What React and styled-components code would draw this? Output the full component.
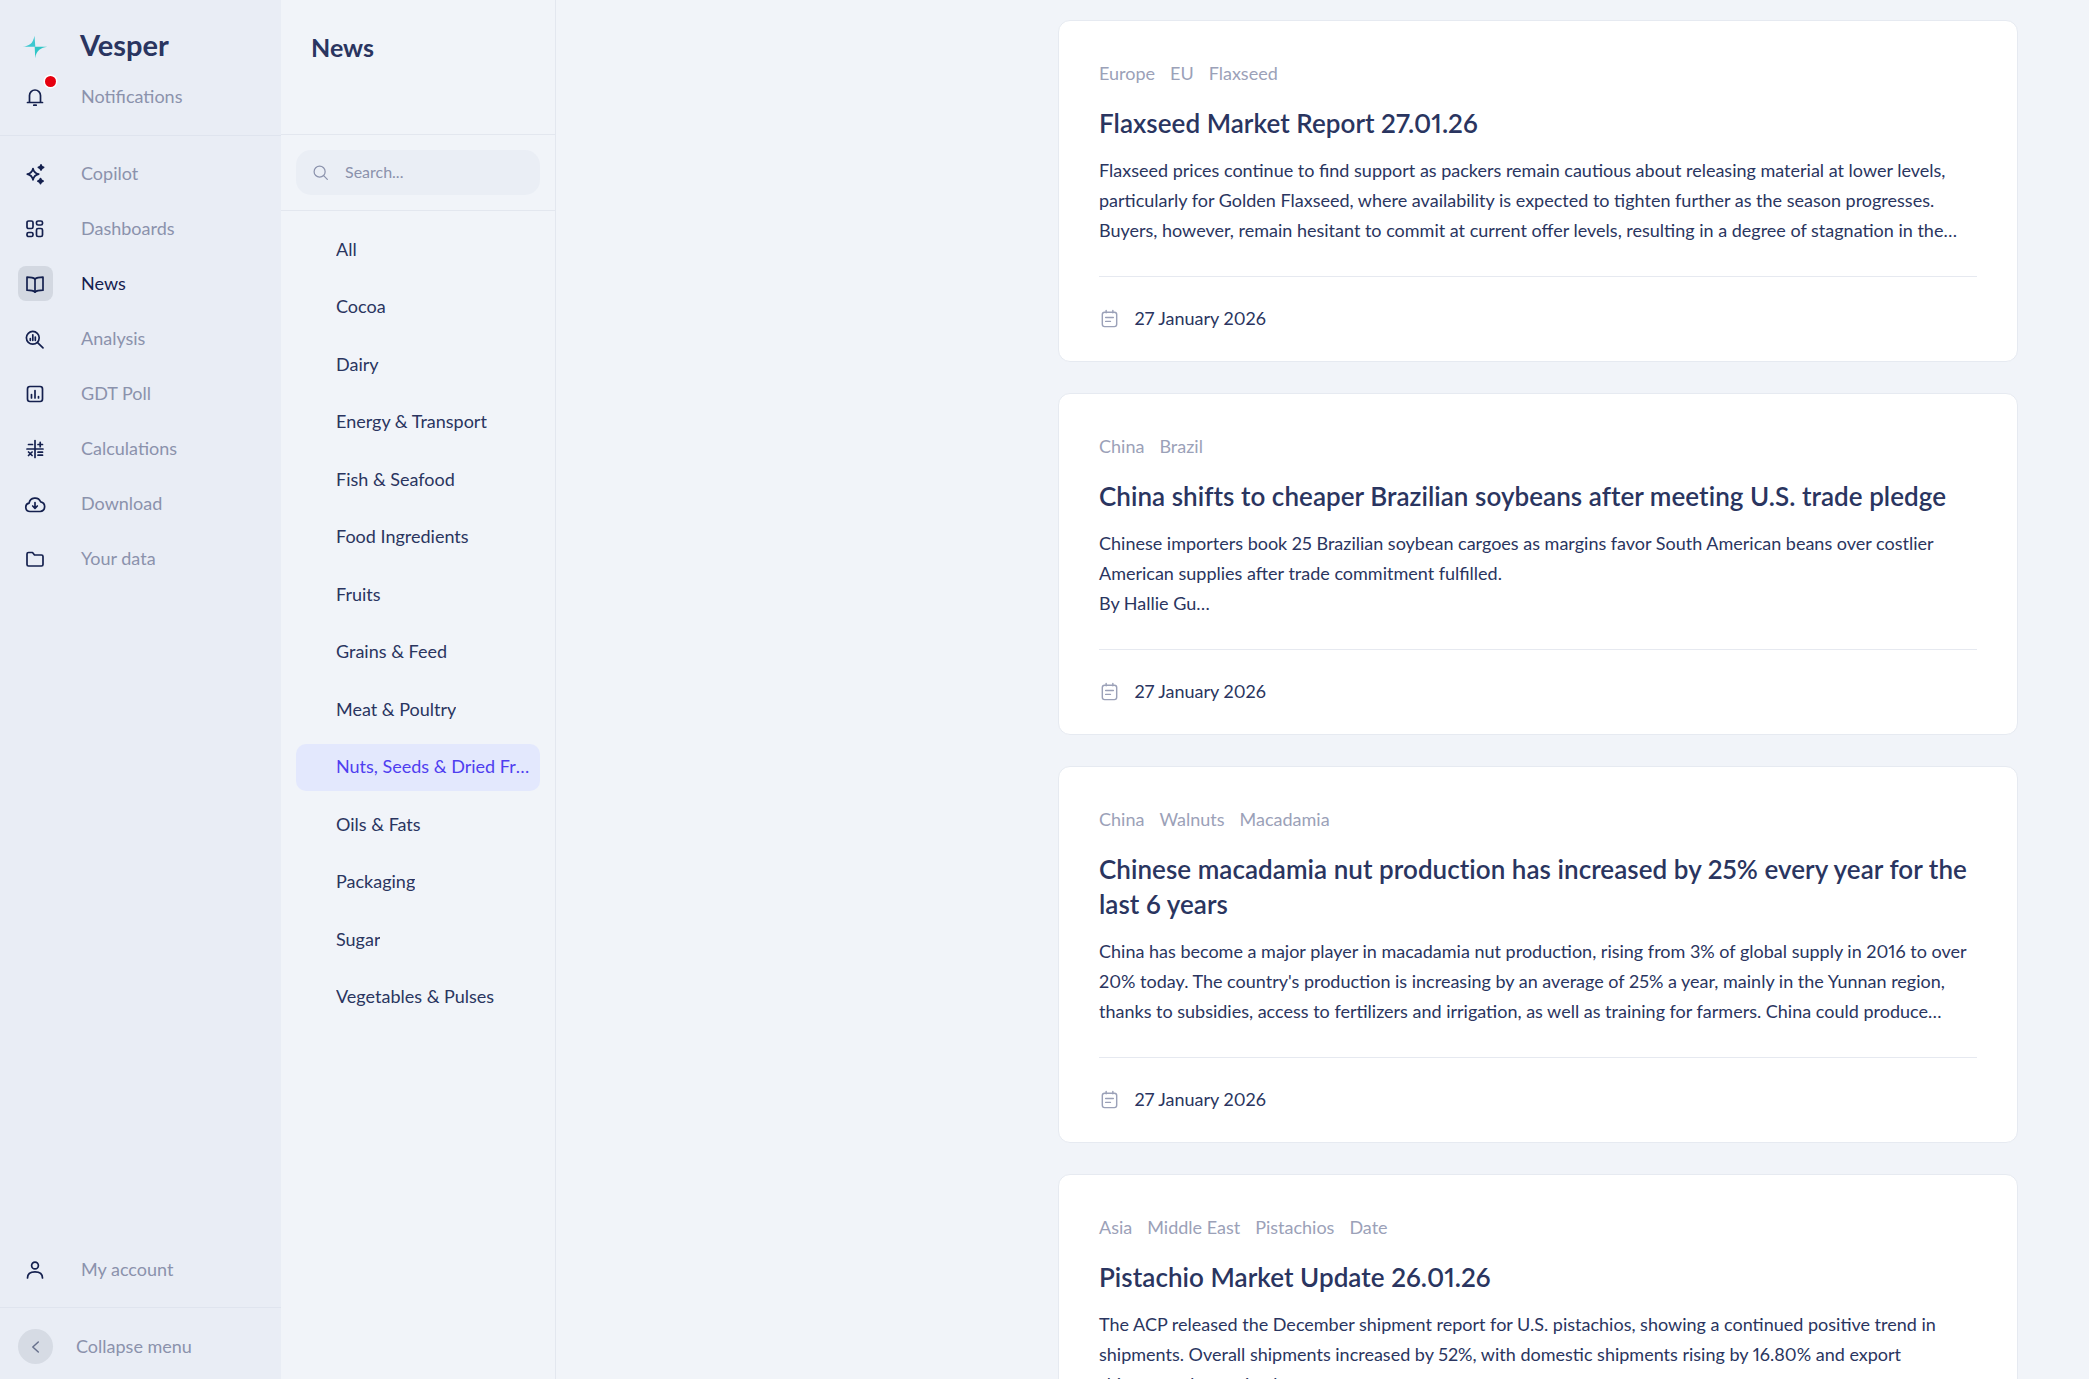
import React from 'react'
import styled, { createGlobalStyle } from 'styled-components'

const GlobalStyle = createGlobalStyle`
  * { box-sizing: border-box; }
  html, body { margin: 0; height: 100%; }
  body {
    font-family: "Lato", "Noto Sans", sans-serif;
    font-variant-numeric: proportional-nums;
    background: #f1f4f9;
    color: #2a3560;
    overflow: hidden;
  }
`

const icons = {
  bell: (
    <>
      <path d="M6.5 17V10.5a5.5 5.5 0 0 1 11 0V17" />
      <path d="M4.5 17.5h15" />
      <path d="M10.8 20.2h2.4" />
    </>
  ),
  sparkles: (
    <>
      <path d="M10 6.5c.7 3.4 2.2 5 5.7 5.7-3.5.7-5 2.2-5.7 5.7-.7-3.5-2.2-5-5.7-5.7 3.5-.7 5-2.3 5.700-5.7z" />
      <path d="M18 2.800c.3 1.600 1 2.300 2.600 2.600-1.600.3-2.300 1-2.600 2.600-.3-1.600-1-2.300-2.600-2.600 1.600-.3 2.300-1 2.600-2.600z" fill="currentColor" />
      <path d="M17.500 16.500c.3 1.600 1 2.300 2.600 2.600-1.600.3-2.300 1-2.600 2.600-.3-1.600-1-2.300-2.600-2.600 1.600-.3 2.300-1 2.600-2.600z" fill="currentColor" />
    </>
  ),
  dashboard: (
    <>
      <rect x="4" y="4" width="6" height="7.5" rx="1.6" />
      <rect x="13.500" y="4" width="6" height="4" rx="1.6" />
      <rect x="13.500" y="11.500" width="6" height="8" rx="1.6" />
      <rect x="4" y="15.500" width="6" height="4" rx="1.6" />
    </>
  ),
  book: (
    <>
      <path d="M12 7c-1.500-1.200-3.500-1.800-8-1.800v13c4.500 0 6.500.6 8 1.800 1.500-1.200 3.500-1.800 8-1.800v-13c-4.500 0-6.500.6-8 1.800z" />
      <path d="M12 7v13" />
    </>
  ),
  analysis: (
    <>
      <circle cx="9.800" cy="10.800" r="6.400" />
      <path d="M14.600 15.600l5.400 5.200" />
      <path d="M7.300 11.500v1.800M9.800 7.800v5.500M12.300 10v3.300" />
    </>
  ),
  poll: (
    <>
      <rect x="4.500" y="4.500" width="15" height="15" rx="2.400" />
      <path d="M8.500 12.500v3.500M12 8.500v7.500M15.500 14.500v1.500" />
    </>
  ),
  calc: (
    <>
      <path d="M12 3.500v17" />
      <path d="M4 12h16" />
      <path d="M5.500 7.500h4M15 7.500h4.500M17.200 5.300v4.400" />
      <path d="M5.500 15l3.600 3.500M9.100 15l-3.600 3.500M15 15.200h4.500M15 18.200h4.500" />
    </>
  ),
  cloud: (
    <>
      <path d="M7 19.500a4.200 4.200 0 0 1-.9-8.300 6 6 0 0 1 11.500-1.400 4.900 4.900 0 0 1-.4 9.700z" />
      <path d="M12 10.500v5.500M9.700 14l2.300 2.300 2.300-2.300" />
    </>
  ),
  folder: (
    <path d="M4 7a1.500 1.500 0 0 1 1.500-1.500h4l2 2.500h7A1.500 1.500 0 0 1 20 9.500v8a1.500 1.500 0 0 1-1.500 1.500h-13A1.500 1.500 0 0 1 4 17.500z" />
  ),
  user: (
    <>
      <circle cx="12" cy="7.500" r="3.400" />
      <path d="M4.500 20c0-4 3-6.200 7.500-6.200s7.500 2.200 7.500 6.200" />
    </>
  ),
  search: (
    <>
      <circle cx="11" cy="11" r="6.300" />
      <path d="M15.600 15.600l4.200 4.200" />
    </>
  ),
  calendar: (
    <>
      <rect x="4.500" y="5.500" width="15" height="15" rx="2.400" />
      <path d="M8.500 3.500v2.500M15.500 3.500v2.500" />
      <path d="M8 11h8M8 15h5" />
    </>
  ),
  chevron: <path d="M14.500 6.500L8.500 12l6 5.500" />,
}

function Icon({ name, size = 24, stroke = 1.7 }) {
  return (
    <svg
      width={size}
      height={size}
      viewBox="0 0 24 24"
      fill="none"
      stroke="currentColor"
      strokeWidth={stroke}
      strokeLinecap="round"
      strokeLinejoin="round"
    >
      {icons[name]}
    </svg>
  )
}

const navItems = [
  { icon: 'sparkles', label: 'Copilot' },
  { icon: 'dashboard', label: 'Dashboards' },
  { icon: 'book', label: 'News', active: true },
  { icon: 'analysis', label: 'Analysis' },
  { icon: 'poll', label: 'GDT Poll' },
  { icon: 'calc', label: 'Calculations' },
  { icon: 'cloud', label: 'Download' },
  { icon: 'folder', label: 'Your data' },
]

const categories = [
  'All',
  'Cocoa',
  'Dairy',
  'Energy & Transport',
  'Fish & Seafood',
  'Food Ingredients',
  'Fruits',
  'Grains & Feed',
  'Meat & Poultry',
  'Nuts, Seeds & Dried Fruits',
  'Oils & Fats',
  'Packaging',
  'Sugar',
  'Vegetables & Pulses',
]

const articles = [
  {
    tags: ['Europe', 'EU', 'Flaxseed'],
    title: ['Flaxseed Market Report 27.01.26'],
    body: [
      'Flaxseed prices continue to find support as packers remain cautious about releasing material at lower levels,',
      'particularly for Golden Flaxseed, where availability is expected to tighten further as the season progresses.',
      'Buyers, however, remain hesitant to commit at current offer levels, resulting in a degree of stagnation in the…',
    ],
    date: '27 January 2026',
  },
  {
    tags: ['China', 'Brazil'],
    title: ['China shifts to cheaper Brazilian soybeans after meeting U.S. trade pledge'],
    body: [
      'Chinese importers book 25 Brazilian soybean cargoes as margins favor South American beans over costlier',
      'American supplies after trade commitment fulfilled.',
      'By Hallie Gu…',
    ],
    date: '27 January 2026',
  },
  {
    tags: ['China', 'Walnuts', 'Macadamia'],
    title: [
      'Chinese macadamia nut production has increased by 25% every year for the',
      'last 6 years',
    ],
    body: [
      'China has become a major player in macadamia nut production, rising from 3% of global supply in 2016 to over',
      "20% today. The country's production is increasing by an average of 25% a year, mainly in the Yunnan region,",
      'thanks to subsidies, access to fertilizers and irrigation, as well as training for farmers. China could produce…',
    ],
    date: '27 January 2026',
  },
  {
    tags: ['Asia', 'Middle East', 'Pistachios', 'Date'],
    title: ['Pistachio Market Update 26.01.26'],
    body: [
      'The ACP released the December shipment report for U.S. pistachios, showing a continued positive trend in',
      'shipments. Overall shipments increased by 52%, with domestic shipments rising by 16.80% and export',
      'shipments decreasing by…',
    ],
    date: '26 January 2026',
  },
]

function App() {
  return (
    <Page>
      <GlobalStyle />
      <Sidebar>
        <SideHeader>
          <BrandRow>
            <IconBox>
              <svg width="26" height="26" viewBox="0 0 26 26">
                <path d="M.8 12.800C7 12 11 10 12.500 1.800l.8 11z" fill="#3cc8d0" />
                <path d="M25.200 12.800C19 13.800 14.500 16 13.200 24.200l-.5-11.400z" fill="#2fc6c6" />
              </svg>
            </IconBox>
            <Brand>Vesper</Brand>
          </BrandRow>
          <NavRow>
            <IconBox>
              <Icon name="bell" />
              <Dot />
            </IconBox>
            <NavLabel>Notifications</NavLabel>
          </NavRow>
        </SideHeader>
        <Nav>
          {navItems.map((item) => (
            <NavRow key={item.label}>
              <IconBox $active={item.active}>
                <Icon name={item.icon} />
              </IconBox>
              <NavLabel $active={item.active}>{item.label}</NavLabel>
            </NavRow>
          ))}
        </Nav>
        <AccountArea>
          <NavRow>
            <IconBox>
              <Icon name="user" />
            </IconBox>
            <NavLabel>My account</NavLabel>
          </NavRow>
        </AccountArea>
        <CollapseArea>
          <CollapseButton>
            <Icon name="chevron" size={22} stroke={1.6} />
          </CollapseButton>
          <NavLabel>Collapse menu</NavLabel>
        </CollapseArea>
      </Sidebar>

      <Filters>
        <FiltersHeader>News</FiltersHeader>
        <SearchArea>
          <SearchBox>
            <SearchIcon>
              <Icon name="search" size={21} stroke={1.4} />
            </SearchIcon>
            <SearchText>Search...</SearchText>
          </SearchBox>
        </SearchArea>
        <CategoryList>
          {categories.map((name) => (
            <Category key={name} $active={name.startsWith('Nuts')}>
              <CategoryName>{name}</CategoryName>
            </Category>
          ))}
        </CategoryList>
      </Filters>

      <Main>
        <Feed>
          {articles.map((article) => (
            <Card key={article.title[0]}>
              <Tags>
                {article.tags.map((tag) => (
                  <span key={tag}>{tag}</span>
                ))}
              </Tags>
              <Title>
                {article.title.map((line) => (
                  <Line key={line}>{line}</Line>
                ))}
              </Title>
              <Body>
                {article.body.map((line) => (
                  <Line key={line}>{line}</Line>
                ))}
              </Body>
              <CardFooter>
                <DateIcon>
                  <Icon name="calendar" size={23} stroke={1.5} />
                </DateIcon>
                <span>{article.date}</span>
              </CardFooter>
            </Card>
          ))}
        </Feed>
      </Main>
    </Page>
  )
}

export default App

const Page = styled.div`
  display: flex;
  height: 100vh;
  overflow: hidden;
`

const Sidebar = styled.aside`
  width: 281px;
  flex-shrink: 0;
  display: flex;
  flex-direction: column;
  background: #e9edf5;
`

const SideHeader = styled.div`
  height: 136px;
  padding-top: 29px;
  border-bottom: 1px solid #dfe4ee;
  display: flex;
  flex-direction: column;
  gap: 15px;
`

const BrandRow = styled.div`
  display: flex;
  align-items: center;
  padding-left: 18px;
  gap: 27px;
`

const Brand = styled.div`
  padding-bottom: 4px;
  font-size: 29px;
  line-height: 30px;
  font-weight: 700;
  color: #2a3560;
`

const Nav = styled.nav`
  flex: 1;
  padding-top: 20px;
  display: flex;
  flex-direction: column;
  gap: 20px;
`

const NavRow = styled.div`
  display: flex;
  align-items: center;
  padding-left: 18px;
  gap: 28px;
`

const IconBox = styled.div`
  position: relative;
  width: 35px;
  height: 35px;
  padding-right: 1px;
  display: flex;
  align-items: center;
  justify-content: center;
  border-radius: 8px;
  color: #14204e;
  background: ${(p) => (p.$active ? '#d3d8e1' : 'transparent')};
`

const Dot = styled.span`
  position: absolute;
  top: -3px;
  right: -2.5px;
  width: 11px;
  height: 11px;
  border-radius: 50%;
  background: #e6000f;
  box-shadow: 0 0 0 1.5px #fff;
`

const NavLabel = styled.span`
  padding-bottom: 2px;
  font-size: 18px;
  color: ${(p) => (p.$active ? '#14204e' : '#8b92ac')};
`

const AccountArea = styled.div`
  padding-bottom: 20px;
  border-bottom: 1px solid #dfe4ee;
`

const CollapseArea = styled.div`
  display: flex;
  align-items: center;
  gap: 23px;
  padding: 21px 0 15px 18px;
`

const CollapseButton = styled.div`
  width: 35px;
  height: 35px;
  border-radius: 50%;
  display: flex;
  align-items: center;
  justify-content: center;
  background: #d6dbe4;
  color: #666f8b;
`

const Filters = styled.aside`
  width: 275px;
  flex-shrink: 0;
  display: flex;
  flex-direction: column;
  background: #f1f4f9;
  border-right: 1px solid #e3e7ef;
`

const FiltersHeader = styled.h2`
  height: 135px;
  margin: 0;
  padding: 29px 0 0 30px;
  font-size: 25px;
  line-height: 36px;
  font-weight: 700;
  color: #2a3560;
  border-bottom: 1px solid #e3e7ef;
`

const SearchArea = styled.div`
  padding: 15px;
  border-bottom: 1px solid #e3e7ef;
`

const SearchBox = styled.div`
  height: 45px;
  display: flex;
  align-items: center;
  gap: 14px;
  padding-left: 14px;
  border-radius: 15px;
  background: #eaeef5;
`

const SearchIcon = styled.span`
  display: flex;
  color: #8b92ac;
`

const SearchText = styled.span`
  padding-bottom: 2px;
  font-size: 16px;
  color: #8b92ac;
`

const CategoryList = styled.div`
  padding: 15px 15px 0;
  display: flex;
  flex-direction: column;
  gap: 10.5px;
`

const Category = styled.div`
  height: 47px;
  padding: 0 10px 0 40px;
  display: flex;
  align-items: center;
  border-radius: 10px;
  font-size: 18px;
  color: ${(p) => (p.$active ? '#4f3ef0' : '#2a3560')};
  background: ${(p) => (p.$active ? '#e3e8fd' : 'transparent')};
`

const CategoryName = styled.span`
  padding-bottom: 2px;
  white-space: nowrap;
  overflow: hidden;
  text-overflow: ellipsis;
`

const Main = styled.main`
  flex: 1;
  min-width: 0;
  overflow: hidden;
  padding: 20px 71px 0 0;
  display: flex;
  justify-content: flex-end;
`

const Feed = styled.div`
  width: 960px;
  display: flex;
  flex-direction: column;
  gap: 31px;
`

const Card = styled.article`
  flex-shrink: 0;
  padding: 39px 40px 31px;
  background: #fff;
  border: 1px solid #e6eaf1;
  border-radius: 12px;
`

const Tags = styled.div`
  display: flex;
  gap: 15px;
  font-size: 18px;
  line-height: 26px;
  color: #9ba1b8;
`

const Title = styled.h3`
  margin: 20px 0 14px;
  font-size: 26px;
  line-height: 35px;
  font-weight: 600;
  letter-spacing: 0.05px;
  color: #2a3560;
`

const Line = styled.div`
  white-space: nowrap;
`

const Body = styled.div`
  padding-bottom: 31px;
  border-bottom: 1px solid #e6e9f0;
  font-size: 18px;
  line-height: 30px;
  color: #2a3560;
`

const CardFooter = styled.div`
  display: flex;
  align-items: center;
  gap: 14px;
  height: 24px;
  margin-top: 29px;
  font-size: 18px;
  color: #2a3560;
`

const DateIcon = styled.span`
  display: flex;
  margin-left: -1.5px;
  color: #9ba1b8;
`
